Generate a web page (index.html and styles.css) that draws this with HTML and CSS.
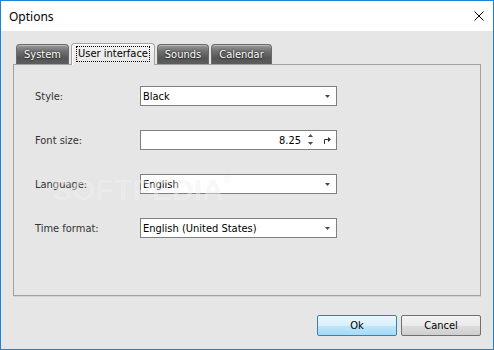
FILE: index.html
```html
<!DOCTYPE html>
<html lang="en">
  <head>
    <meta charset="UTF-8" />
    <title>Options</title>
    <link rel="stylesheet" href="styles.css">
  </head>
  <body>
    <div class="window">
      <div class="titlebar">
        <span class="title">Options</span>
        <svg class="close" width="10" height="10" viewBox="0 0 10 10">
          <path d="M0.5 0.5 L9.5 9.5 M9.5 0.5 L0.5 9.5" stroke="#000" stroke-width="1" />
        </svg>
      </div>

      <div class="client">
        <div class="tabs">
          <div class="tab tab-system">System</div>
          <div class="tab tab-ui active"><span class="focus">User interface</span></div>
          <div class="tab tab-sounds">Sounds</div>
          <div class="tab tab-calendar">Calendar</div>
        </div>

        <div class="panel">
          <div class="form">
            <label>Style:</label>
            <div class="field combo">
              <span class="value">Black</span>
              <svg class="arrow" width="5" height="3" viewBox="0 0 5 3"><polygon points="0,0 5,0 2.5,3" fill="#4a4a4a" /></svg>
            </div>

            <label>Font size:</label>
            <div class="field spin">
              <span class="value num">8.25</span>
              <svg class="updown" width="5" height="12" viewBox="0 0 5 12">
                <polygon points="2.5,0 5,3 0,3" fill="#4a4a4a" />
                <polygon points="0,8 5,8 2.5,11" fill="#4a4a4a" />
              </svg>
              <svg class="reset" width="8" height="8" viewBox="0 0 8 8">
                <path d="M1.5 8 V3.5 H5" stroke="#333" stroke-width="1" fill="none" />
                <polygon points="5,1 8,3.5 5,6" fill="#333" />
              </svg>
            </div>

            <label>Language:</label>
            <div class="field combo">
              <span class="value">English</span>
              <svg class="arrow" width="5" height="3" viewBox="0 0 5 3"><polygon points="0,0 5,0 2.5,3" fill="#4a4a4a" /></svg>
            </div>

            <label>Time format:</label>
            <div class="field combo">
              <span class="value">English (United States)</span>
              <svg class="arrow" width="5" height="3" viewBox="0 0 5 3"><polygon points="0,0 5,0 2.5,3" fill="#4a4a4a" /></svg>
            </div>
          </div>

          <span class="watermark">SOFTPEDIA<sup>®</sup></span>
        </div>

        <div class="buttons">
          <button class="btn btn-ok">Ok</button>
          <button class="btn">Cancel</button>
        </div>
      </div>
    </div>
  </body>
</html>
```

FILE: styles.css
```css
body {
  margin: 0;
  padding: 0;
  background: #e6e6e6;
  font-family: 'DejaVu Sans', 'Liberation Sans', sans-serif;
  font-stretch: condensed;
  font-size: 11px;
}

.window {
  width: 494px;
  height: 350px;
  box-sizing: border-box;
  border: 1px solid #1a84d8;
  background: #e6e6e6;
  display: flex;
  flex-direction: column;
}

.titlebar {
  height: 30px;
  background: #fff;
  display: flex;
  align-items: center;
  justify-content: space-between;
  padding: 0 9px 0 8px;
}

.title {
  font-family: 'Noto Sans', 'Open Sans', sans-serif;
  font-stretch: normal;
  font-size: 12px;
  color: #000;
}

.close {
  display: block;
}

.client {
  padding: 12px 12px 0 12px;
  display: flex;
  flex-direction: column;
}

/* tab strip */
.tabs {
  display: flex;
  align-items: flex-end;
  gap: 2px;
  height: 21px;
  padding-left: 3px;
}

.tab {
  height: 20px;
  box-sizing: border-box;
  display: flex;
  align-items: center;
  justify-content: center;
  color: #fff;
  text-shadow: 0 0 2px #222, 0 1px 1px #333;
  border: 1px solid #6a6a6a;
  border-bottom: none;
  border-radius: 4px 4px 0 0;
  background: linear-gradient(#9a9a9a, #6e6e6e 35%, #555 70%, #5e5e5e);
  box-shadow: inset 0 1px 0 rgba(255, 255, 255, 0.35);
}

.tab-system { width: 53px; }
.tab-ui { width: 84px; }
.tab-sounds { width: 52px; }
.tab-calendar { width: 61px; }

.tab.active {
  position: relative;
  z-index: 1;
  height: 22px;
  margin-bottom: -1px;
  color: #000;
  text-shadow: none;
  border-color: #a4a4a4;
  background: linear-gradient(#f4f4f4, #e6e6e6);
  box-shadow: inset 1px 1px 0 #fff;
  padding-bottom: 1px;
}

.focus {
  outline: 1px dotted #000;
  padding: 0 1px;
  line-height: 14px;
}

/* page */
.panel {
  position: relative;
  height: 232px;
  box-sizing: border-box;
  border: 1px solid #a2a2a2;
  box-shadow: 0 1px 0 #d4d4d4;
  padding: 21px 0 0 21px;
}

.form {
  display: grid;
  grid-template-columns: 105px 197px;
  grid-auto-rows: 20px;
  row-gap: 24px;
  align-items: center;
}

.form label {
  color: #333;
}

.field {
  height: 20px;
  box-sizing: border-box;
  border: 1px solid #7f7f7f;
  background: #fff;
  display: flex;
  align-items: center;
  padding: 0 6px 0 2px;
  color: #000;
}

.value {
  flex-grow: 1;
}

.value.num {
  text-align: right;
  padding-right: 7px;
}

.updown {
  display: block;
  margin-right: 10px;
}

.reset {
  display: block;
  margin-right: -1px;
}

.arrow {
  display: block;
  margin-top: 1px;
}

/* faint site watermark over the page */
.watermark {
  position: absolute;
  left: 38px;
  top: 110px;
  font-family: 'Liberation Sans', sans-serif;
  font-stretch: normal;
  font-weight: bold;
  font-size: 30px;
  line-height: 30px;
  color: rgba(255, 255, 255, 0.45);
  text-shadow: 0 0 1px rgba(0, 0, 0, 0.05);
  pointer-events: none;
}

.watermark sup {
  font-size: 10px;
  font-weight: normal;
  vertical-align: top;
  line-height: 10px;
}

/* dialog buttons */
.buttons {
  display: flex;
  justify-content: flex-end;
  gap: 4px;
  margin-top: 19px;
}

.btn {
  width: 80px;
  height: 21px;
  box-sizing: border-box;
  font-family: inherit;
  font-stretch: inherit;
  font-size: 11px;
  color: #000;
  border: 1px solid #707070;
  border-radius: 2px;
  background: linear-gradient(#f2f2f2, #ebebeb 50%, #dddddd 51%, #cfcfcf);
  padding: 0;
}

.btn-ok {
  border-color: #3c7fb1;
  background: linear-gradient(#eaf6fd, #d9f0fc 50%, #bee6fd 51%, #a7d9f5);
}
```
